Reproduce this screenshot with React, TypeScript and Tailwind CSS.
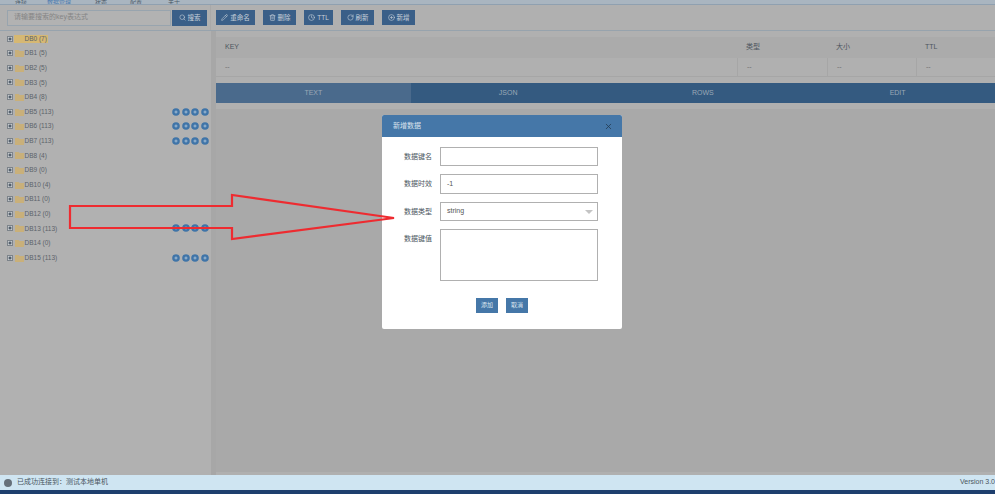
import { Search, Pencil, Trash2, Clock, RotateCw, CirclePlus, X } from "lucide-react";

const FONT = "font-['Liberation_Sans','Noto_Sans_CJK_SC',sans-serif]";

const DBS = [
  { name: "DB0 (7)", active: true },
  { name: "DB1 (5)" },
  { name: "DB2 (5)" },
  { name: "DB3 (5)" },
  { name: "DB4 (8)" },
  { name: "DB5 (113)", tools: true },
  { name: "DB6 (113)", tools: true },
  { name: "DB7 (113)", tools: true },
  { name: "DB8 (4)" },
  { name: "DB9 (0)" },
  { name: "DB10 (4)" },
  { name: "DB11 (0)" },
  { name: "DB12 (0)" },
  { name: "DB13 (113)", tools: true },
  { name: "DB14 (0)" },
  { name: "DB15 (113)", tools: true },
];

const ACTIONS = [
  { label: "重命名", icon: Pencil, w: "w-[39px]" },
  { label: "删除", icon: Trash2, w: "w-[33px]" },
  { label: "TTL", icon: Clock, w: "w-[29px]" },
  { label: "刷新", icon: RotateCw, w: "w-[33px]" },
  { label: "新增", icon: CirclePlus, w: "w-[33px]" },
];

const FIELDS = [
  { label: "数据键名", value: "", h: "h-[19px]" },
  { label: "数据时效", value: "-1", h: "h-[20px]" },
  { label: "数据类型", value: "string", h: "h-[19px]", select: true },
  { label: "数据键值", value: "", h: "h-[52px]" },
];

const ToolDot = () => (
  <svg width="8" height="8" viewBox="0 0 8 8">
    <circle cx="4" cy="4" r="3.8" fill="#3f74a8" />
    <path d="M2.5 4h3M4 2.5v3" stroke="#a3bcd4" strokeWidth="1" />
  </svg>
);

const ExpandBox = () => (
  <svg width="6" height="6" viewBox="0 0 6 6" className="shrink-0">
    <rect x="0.5" y="0.5" width="5" height="5" fill="#c4c8cc" stroke="#7c838a" strokeWidth="1" />
    <path d="M1.5 3h3M3 1.5v3" stroke="#2f3d4c" strokeWidth="1" />
  </svg>
);

const FolderIcon = () => (
  <svg width="9" height="8" viewBox="0 0 9 8" className="shrink-0">
    <path d="M0 1h3.5l1 1H9v6H0Z" fill="#c9b07a" />
  </svg>
);

const TreeRow = ({ name, active, tools }: { name: string; active?: boolean; tools?: boolean }) => (
  <div className="flex h-[14.6px] items-center pl-[7px] pr-[2px] text-[6.5px] text-[#5c636a]">
    <ExpandBox />
    <div className={`ml-[1px] flex h-[8px] items-center pl-[1px] pr-[1px] ${active ? "bg-[#d6b873]" : ""}`}>
      {active ? <span className="w-[9px]" /> : <FolderIcon />}
      <span className="whitespace-nowrap pl-[0.5px]">{name}</span>
    </div>
    {tools && (
      <div className="ml-auto flex gap-[1.6px]">
        <ToolDot />
        <ToolDot />
        <ToolDot />
        <ToolDot />
      </div>
    )}
  </div>
);

const Arrow = () => (
  <svg width="340" height="60" viewBox="0 0 340 60" className="absolute left-[60px] top-[185px]">
    <path d="M10 21H172V10L334 33L172 54V43H10Z" fill="none" stroke="#ee2b30" strokeWidth="2.2" />
  </svg>
);

const Modal = () => (
  <div className="absolute left-[382px] top-[115px] h-[214px] w-[240px] overflow-hidden rounded-[2px] bg-white">
    <div className="flex h-[22px] items-center justify-between bg-[#4577a8] pl-[11px] pr-[9px] text-[7px] text-[#d8e2ec]">
      <span>新增数据</span>
      <X size={9} className="text-[#22384f]" />
    </div>
    <div className="mt-[10px] flex flex-col gap-[8px]">
      {FIELDS.map((f) => (
        <div key={f.label} className="flex items-start">
          <label className="w-[50px] pt-[5px] text-right text-[7px] leading-[9px] text-[#4a5560]">{f.label}</label>
          <div className={`ml-[8px] flex w-[158px] items-center justify-between border border-[#b0b0b0] pl-[6px] pr-[4px] text-[7px] text-[#555] ${f.h}`}>
            <span>{f.value}</span>
            {f.select && (
              <svg width="8" height="4" viewBox="0 0 8 4">
                <path d="M0 0h8L4 4Z" fill="#c4c4c4" />
              </svg>
            )}
          </div>
        </div>
      ))}
    </div>
    <div className="mt-[17px] flex justify-center gap-[8px]">
      <button className="h-[15px] w-[22px] bg-[#4577a8] text-[6px] text-[#dce6f0]">添加</button>
      <button className="h-[15px] w-[22px] bg-[#4577a8] text-[6px] text-[#dce6f0]">取消</button>
    </div>
  </div>
);

export default function App() {
  return (
    <div className={`relative flex h-[494px] w-[995px] flex-col overflow-hidden bg-[#ababab] ${FONT}`}>
      <div className="flex h-[5px] shrink-0 items-end overflow-hidden border-b border-[#8fa0b0] bg-[#a9b5c0] pl-[15px] text-[6px] leading-[4px] text-[#4b5a68]">
        <span className="w-[32px]">连接</span>
        <span className="mr-[22px] w-[26px] text-[#4b7bb0]">数据管理</span>
        <span className="w-[35px]">状态</span>
        <span className="w-[38px]">配置</span>
        <span>关于</span>
      </div>

      <div className="flex h-[26px] shrink-0 items-center border-b border-[#97a3ad] bg-[#b0b0b0]">
        <div className="flex h-full w-[211px] items-center border-r border-[#a8a8a8] pl-[7px]">
          <div className="flex h-[16px] w-[164px] items-center border border-[#98a4ae] bg-[#b2b2b2] px-[6px] text-[7px] text-[#858585]">
            请输要搜索的key表达式
          </div>
          <button className="ml-[1px] flex h-[16px] w-[35px] items-center justify-center gap-[2px] bg-[#3a5f88] text-[6.5px] text-[#c7d0da]">
            <Search size={7} />
            搜索
          </button>
        </div>
        <div className="ml-[5px] flex gap-[8px]">
          {ACTIONS.map((a) => (
            <button
              key={a.label}
              className={`flex h-[15px] items-center justify-center gap-[2px] bg-[#3a5f88] text-[6.5px] text-[#c7d0da] ${a.w}`}
            >
              <a.icon size={7} />
              {a.label}
            </button>
          ))}
        </div>
      </div>

      <div className="flex min-h-0 flex-1">
        <div className="w-[211px] shrink-0 bg-[#b1b1b1] pt-[0.4px]">
          {DBS.map((db) => (
            <TreeRow key={db.name} {...db} />
          ))}
        </div>
        <div className="w-[5px] shrink-0 bg-[#a7a7a7]" />
        <div className="flex min-w-0 flex-1 flex-col bg-[#b0b0b0] pt-[6px]">
          <div className="text-[7px]">
            <div className="grid h-[21px] grid-cols-[521px_90px_89px_79px] items-center bg-[#ababab] text-[#4d5660]">
              <span className="pl-[9px]">KEY</span>
              <span className="pl-[9px]">类型</span>
              <span className="pl-[9px]">大小</span>
              <span className="pl-[9px]">TTL</span>
            </div>
            <div className="grid h-[19px] grid-cols-[521px_90px_89px_79px] items-center border-b border-[#a6a6a6] text-[#6d6d6d]">
              <span className="pl-[9px]">--</span>
              <span className="flex h-full items-center border-l border-[#a6a6a6] pl-[9px]">--</span>
              <span className="flex h-full items-center border-l border-[#a6a6a6] pl-[9px]">--</span>
              <span className="flex h-full items-center border-l border-[#a6a6a6] pl-[9px]">--</span>
            </div>
          </div>
          <div className="mt-[6px] grid h-[20px] grid-cols-4 bg-[#345a80] text-center text-[7px] leading-[20px] text-[#9aa8b6]">
            <span className="bg-[#4a6a8c]">TEXT</span>
            <span>JSON</span>
            <span>ROWS</span>
            <span>EDIT</span>
          </div>
          <div className="mb-[3px] mt-[6px] flex-1 bg-[#a9a9a9]" />
        </div>
      </div>

      <div className="flex h-[15px] shrink-0 items-center justify-between bg-[#cfe5f2] pl-[4px] text-[7px] text-[#4a5560]">
        <div className="flex items-center gap-[5px]">
          <span className="h-[8px] w-[8px] rounded-full bg-[#66707a]" />
          <span>已成功连接到：测试本地单机</span>
        </div>
        <span>Version 3.0</span>
      </div>
      <div className="h-[4px] shrink-0 bg-[#1e3f6e]" />

      <Modal />
      <Arrow />
    </div>
  );
}
